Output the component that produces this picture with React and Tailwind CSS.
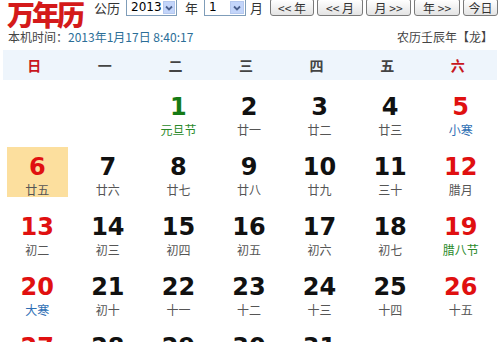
import React from "react";

const cjk = { fontFamily: '"Noto Sans CJK SC", "DejaVu Sans", sans-serif' };
const num = { fontFamily: '"DejaVu Sans", "Liberation Sans", sans-serif' };

const weekDays = ["日", "一", "二", "三", "四", "五", "六"];

// lunar labels for Jan 2013
const lunar = [
  "元旦节", "廿一", "廿二", "廿三", "小寒", "廿五", "廿六", "廿七", "廿八", "廿九",
  "三十", "腊月", "初二", "初三", "初四", "初五", "初六", "初七", "腊八节", "大寒",
  "初十", "十一", "十二", "十三", "十四", "十五", "十六", "十七", "十八", "十九", "二十",
];
const festival = ["元旦节", "腊八节"];
const term = ["小寒", "大寒"];

const Select = ({ value, width }) => (
  <div
    className="shrink-0 flex items-stretch h-[17px] -mt-[1px] border border-[#7f9db9] bg-white"
    style={{ width }}
  >
    <div className="flex-1 pl-[4px] text-[12px] leading-[15px] text-black" style={num}>
      {value}
    </div>
    <div className="w-[14px] m-[1px] bg-[#c3d5fa] border border-[#b5c8ee] flex items-center justify-center">
      <svg width="8" height="6" viewBox="0 0 8 6">
        <path d="M1 1.5 L4 4.5 L7 1.5" stroke="#4a5f8c" strokeWidth="1.8" fill="none" />
      </svg>
    </div>
  </div>
);

const NavButton = ({ children, w }) => (
  <button
    className="shrink-0 whitespace-nowrap h-[17px] -mt-[2px] border border-[#7a7a7a] rounded-b-[3px] rounded-t-[2px] bg-gradient-to-b from-white to-[#e4e4e4] text-[12px] leading-[14px] text-[#333] flex items-center justify-center pt-[1px]"
    style={{ ...cjk, width: w }}
  >
    {children}
  </button>
);

const DayCell = ({ day, col }) => {
  if (!day) return <div className="h-[60px]" />;
  const label = lunar[day - 1];
  const today = day === 6;
  let numColor = "text-[#111]";
  if (col === 0 || col === 6) numColor = "text-[#e01010]";
  if (day === 1) numColor = "text-[#157a15]";
  let labelColor = "text-[#555]";
  if (festival.includes(label)) labelColor = "text-[#2a8a2a]";
  if (term.includes(label)) labelColor = "text-[#2f6fb4]";
  return (
    <div className="h-[60px] px-[5px] py-[5px]">
      <div
        className={`h-[50px] flex flex-col items-center pt-[6px] ${today ? "bg-[#fcdf9e]" : ""}`}
      >
        <div className={`text-[24px] leading-[28px] font-bold ${numColor}`} style={num}>
          {day}
        </div>
        <div className={`mt-[2px] text-[12px] leading-[14px] whitespace-nowrap ${labelColor}`} style={cjk}>
          {label}
        </div>
      </div>
    </div>
  );
};

export default function App() {
  const cells = [null, null];
  for (let d = 1; d <= 31; d++) cells.push(d);
  while (cells.length % 7) cells.push(null);

  return (
    <div className="w-[500px] h-[342px] overflow-hidden bg-white whitespace-nowrap" style={cjk}>
      <div className="flex items-start h-[30px]">
        <div className="shrink-0 w-[94px] pl-[7px] text-[28px] leading-[29px] font-black text-[#d41a1a] tracking-[-3px]">
          万年历
        </div>
        <div className="shrink-0 flex items-center h-[16px]">
          <span className="shrink-0 text-[13px] text-[#333] mr-[6px]">公历</span>
          <Select value="2013" width={51} />
          <span className="shrink-0 text-[13px] text-[#333] ml-[8px] mr-[6px]">年</span>
          <Select value="1" width={42} />
          <span className="shrink-0 text-[13px] text-[#333] ml-[4px] mr-[7px]">月</span>
          <div className="shrink-0 flex gap-[3px]">
            <NavButton w={44}>{"<< 年"}</NavButton>
            <NavButton w={46}>{"<< 月"}</NavButton>
            <NavButton w={45}>{"月 >>"}</NavButton>
            <NavButton w={46}>{"年 >>"}</NavButton>
            <NavButton w={35}>今日</NavButton>
          </div>
        </div>
      </div>

      <div className="flex justify-between items-center h-[14px] text-[12px] leading-[14px] px-[8px] pr-[7px]">
        <div className="text-[#444]">
          本机时间：<span className="text-[#2b6e97]">2013年1月17日 8:40:17</span>
        </div>
        <div className="text-[#444]">农历壬辰年【龙】</div>
      </div>

      <div className="mt-[6px] ml-[3px] w-[494px] h-[30px] bg-[#eef5fc] grid grid-cols-7 items-center">
        {weekDays.map((w, i) => (
          <div
            key={w}
            className={`text-center pr-[8px] text-[14px] font-bold ${
              i === 0 || i === 6 ? "text-[#c8161d]" : "text-[#444]"
            }`}
          >
            {w}
          </div>
        ))}
      </div>

      <div className="ml-[2px] w-[494px] pt-[2px] grid grid-cols-7">
        {cells.map((d, i) => (
          <DayCell key={i} day={d} col={i % 7} />
        ))}
      </div>
    </div>
  );
}
